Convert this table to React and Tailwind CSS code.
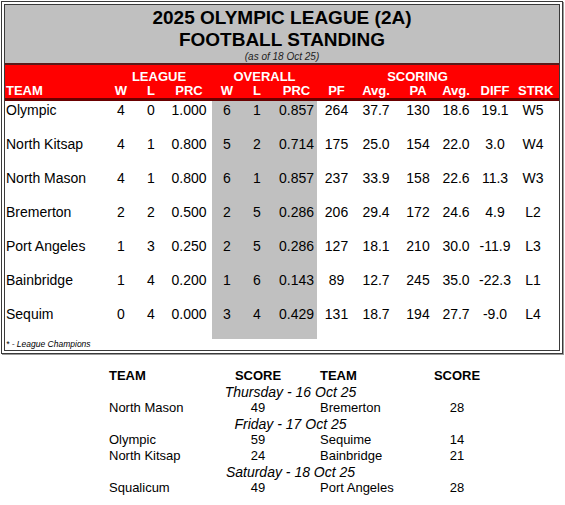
import React from "react";

// standings rows: team, league W/L/PRC, overall W/L/PRC, PF, Avg, PA, Avg, DIFF, STRK
const STANDINGS = [
  ["Olympic", 4, 0, "1.000", 6, 1, "0.857", 264, "37.7", 130, "18.6", "19.1", "W5"],
  ["North Kitsap", 4, 1, "0.800", 5, 2, "0.714", 175, "25.0", 154, "22.0", "3.0", "W4"],
  ["North Mason", 4, 1, "0.800", 6, 1, "0.857", 237, "33.9", 158, "22.6", "11.3", "W3"],
  ["Bremerton", 2, 2, "0.500", 2, 5, "0.286", 206, "29.4", 172, "24.6", "4.9", "L2"],
  ["Port Angeles", 1, 3, "0.250", 2, 5, "0.286", 127, "18.1", 210, "30.0", "-11.9", "L3"],
  ["Bainbridge", 1, 4, "0.200", 1, 6, "0.143", 89, "12.7", 245, "35.0", "-22.3", "L1"],
  ["Sequim", 0, 4, "0.000", 3, 4, "0.429", 131, "18.7", 194, "27.7", "-9.0", "L4"],
];

const COLUMNS = ["TEAM", "W", "L", "PRC", "W", "L", "PRC", "PF", "Avg.", "PA", "Avg.", "DIFF", "STRK"];

// extra classes per column (alignment + grey band for overall)
const CELL = [
  "text-left pl-px",
  "text-center",
  "text-center",
  "text-center",
  "text-center bg-[#c0c0c0]",
  "text-center bg-[#c0c0c0]",
  "text-center pl-[4px] bg-[#c0c0c0]",
  "text-center",
  "text-center",
  "text-center",
  "text-center",
  "text-center",
  "text-center",
];

const HEAD = [
  "text-left pl-px",
  "text-center",
  "text-center",
  "text-center",
  "text-center",
  "text-center",
  "text-center pl-[4px]",
  "text-center",
  "text-center",
  "text-center",
  "text-center",
  "text-center",
  "text-center",
];

const GRID = "grid grid-cols-[101px_30px_30px_46px_30px_30px_45px_39px_40px_44px_32px_46px_30px]";

const SCHEDULE = [
  { day: "Thursday - 16 Oct 25", games: [["North Mason", 49, "Bremerton", 28]] },
  {
    day: "Friday - 17 Oct 25",
    games: [
      ["Olympic", 59, "Sequime", 14],
      ["North Kitsap", 24, "Bainbridge", 21],
    ],
  },
  { day: "Saturday - 18 Oct 25", games: [["Squalicum", 49, "Port Angeles", 28]] },
];

const SCHED_GRID = "grid grid-cols-[124px_50px_37px_112px_50px]";

const App = () => {
  return (
    <div className="w-[565px] h-[505px] bg-white text-black font-['Liberation_Sans',Arial,sans-serif] pl-px pt-px">
      {/* standings box */}
      <div className="w-[562px] border-[4px] border-double border-[#3a3a3a] shadow-[1px_1px_0_#9a9a9a]">
        <div className="bg-[#c0c0c0] h-[58px] pt-[2px] text-center">
          <div className="text-[19px] leading-[22px] font-bold">2025 OLYMPIC LEAGUE (2A)</div>
          <div className="text-[19px] leading-[22px] font-bold">FOOTBALL STANDING</div>
          <div className="text-[10px] leading-[12px] italic text-[#222]">(as of 18 Oct 25)</div>
        </div>

        <div className="bg-[#ff0000] border-t-[2px] border-b-[3px] border-t-[#5a1a1a] border-b-[#6a0000] h-[38px] pt-[4px] text-white font-bold text-[13px]">
          <div className={`${GRID} leading-[15px]`}>
            <div />
            <div className="col-span-3 text-center">LEAGUE</div>
            <div className="col-span-3 text-center">OVERALL</div>
            <div className="col-span-5 text-center">SCORING</div>
          </div>
          <div className={`${GRID} leading-[14px]`}>
            {COLUMNS.map((c, i) => (
              <div key={i} className={HEAD[i]}>
                {c}
              </div>
            ))}
          </div>
        </div>

        <div className="text-[14px]">
          {STANDINGS.map((row) => (
            <div key={row[0]} className={`${GRID} h-[34px] leading-[18px]`}>
              {row.map((v, i) => (
                <div key={i} className={CELL[i]}>
                  {v}
                </div>
              ))}
            </div>
          ))}
        </div>

        <div className="h-[11px] pl-px text-[8.5px] leading-[11px] italic">* - League Champions</div>
      </div>

      {/* weekly results */}
      <div className="mt-[14px] ml-[108px] text-[13px] leading-[16px]">
        <div className={`${SCHED_GRID} font-bold`}>
          <div>TEAM</div>
          <div className="text-center">SCORE</div>
          <div />
          <div>TEAM</div>
          <div className="text-center">SCORE</div>
        </div>
        {SCHEDULE.map((d) => (
          <div key={d.day}>
            <div className="w-[373px] pr-[10px] text-center italic text-[14px]">{d.day}</div>
            {d.games.map((g) => (
              <div key={g[0]} className={SCHED_GRID}>
                <div>{g[0]}</div>
                <div className="text-center">{g[1]}</div>
                <div />
                <div>{g[2]}</div>
                <div className="text-center">{g[3]}</div>
              </div>
            ))}
          </div>
        ))}
      </div>
    </div>
  );
};

export default App;
